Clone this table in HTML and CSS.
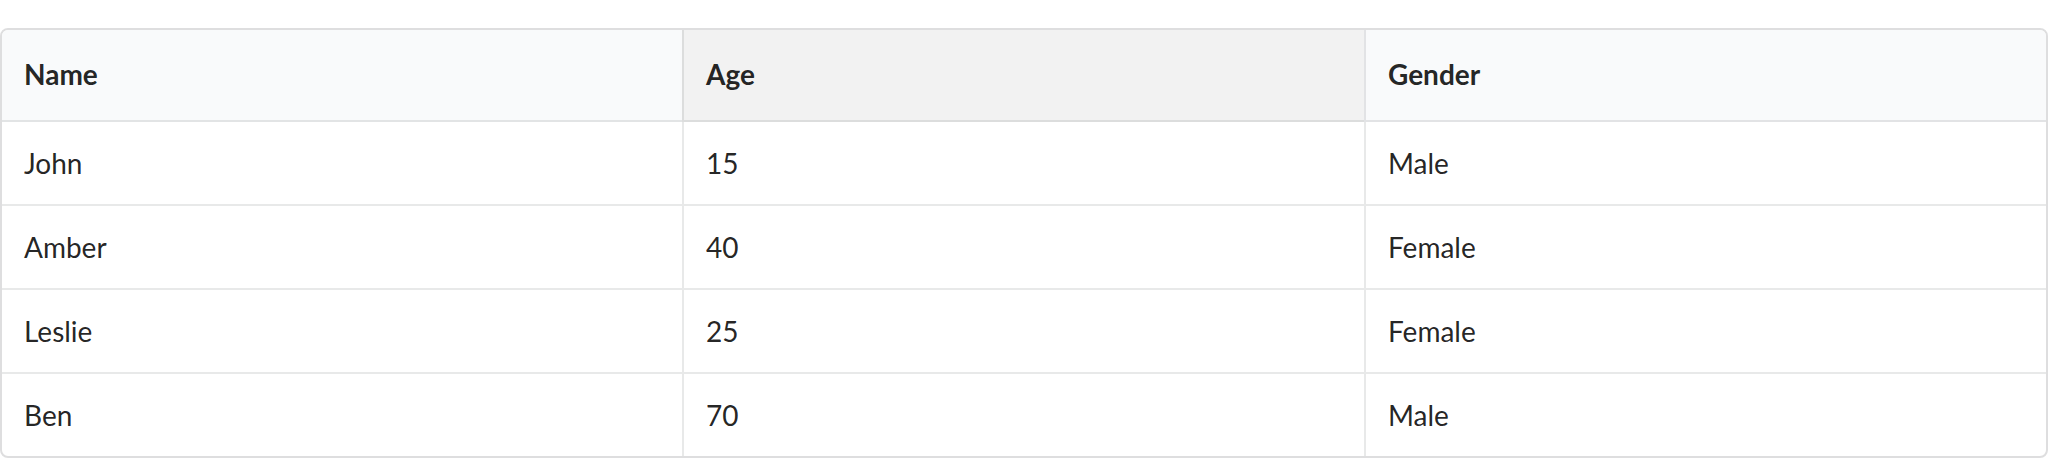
FILE: index.html
```html
<!DOCTYPE html>
<html>
<head>
<meta charset="utf-8">
<link rel="stylesheet" href="styles.css">
</head>
<body>
<table class="data-table">
  <colgroup>
    <col class="col-first">
    <col class="col-rest">
    <col class="col-rest">
  </colgroup>
  <thead>
    <tr>
      <th>Name</th>
      <th class="sorted">Age</th>
      <th>Gender</th>
    </tr>
  </thead>
  <tbody>
    <tr><td>John</td><td>15</td><td>Male</td></tr>
    <tr><td>Amber</td><td>40</td><td>Female</td></tr>
    <tr><td>Leslie</td><td>25</td><td>Female</td></tr>
    <tr><td>Ben</td><td>70</td><td>Male</td></tr>
  </tbody>
</table>
</body>
</html>
```
FILE: styles.css
```css
html, body {
  margin: 0;
  padding: 0;
  background: #ffffff;
}
body {
  font-family: Lato, "Helvetica Neue", Arial, sans-serif;
  font-size: 28px;
  color: rgba(0, 0, 0, 0.87);
}
.data-table {
  margin-top: 28px;
  width: 100%;
  table-layout: fixed;
  border-collapse: separate;
  border-spacing: 0;
  border: 2px solid rgba(34, 36, 38, 0.15);
  border-radius: 8px;
  box-sizing: border-box;
  line-height: 40px;
}
.col-first { width: 680px; }
.col-rest { width: 682px; }
.data-table th {
  text-align: left;
  font-weight: 700;
  background: #f9fafb;
  padding: 24px 22px 26px;
  border-bottom: 2px solid rgba(34, 36, 38, 0.1);
  color: rgba(0, 0, 0, 0.87);
}
.data-table th:first-child { border-top-left-radius: 6px; }
.data-table th:last-child { border-top-right-radius: 6px; }
.data-table th.sorted {
  background: #f2f2f2;
}
.data-table th + th,
.data-table td + td {
  border-left: 2px solid rgba(34, 36, 38, 0.1);
}
.data-table td {
  padding: 21px 22px 21px;
  font-weight: 400;
}
.data-table tbody tr + tr td {
  border-top: 2px solid rgba(34, 36, 38, 0.1);
}
```
